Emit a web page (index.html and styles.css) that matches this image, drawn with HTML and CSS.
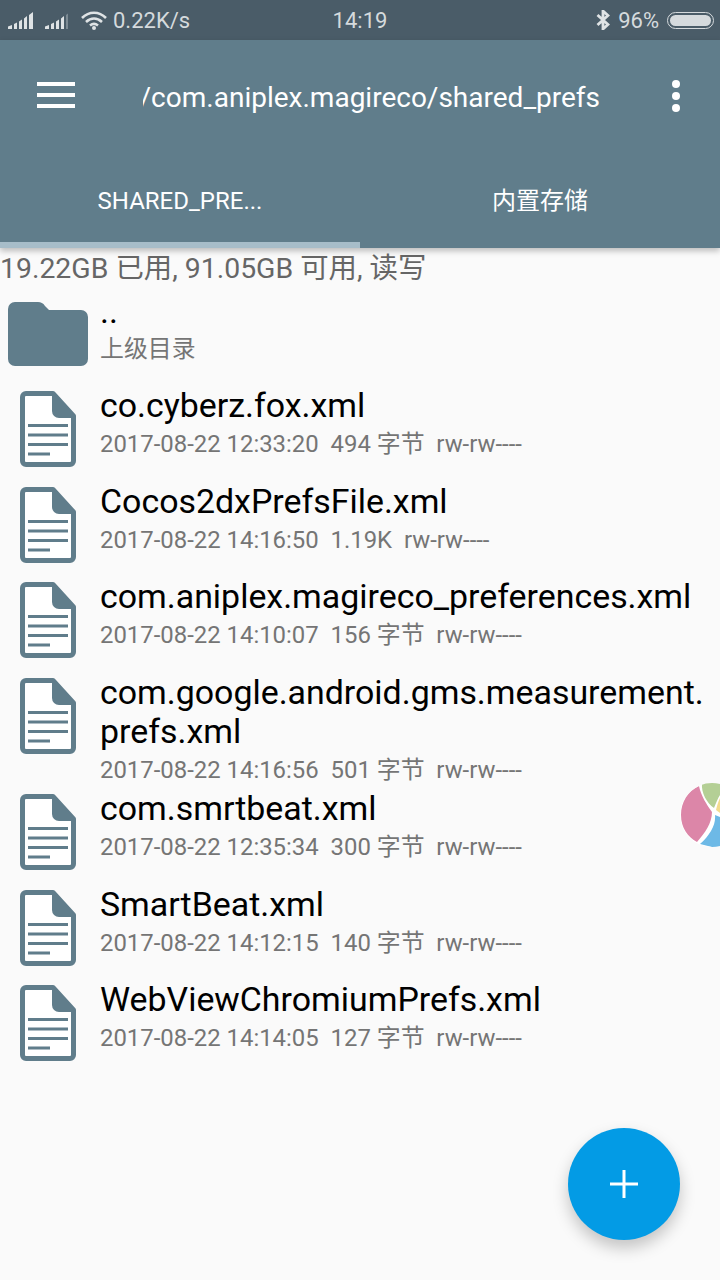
FILE: index.html
```html
<!DOCTYPE html>
<html lang="zh-CN">
<head>
  <meta charset="UTF-8">
  <meta name="viewport" content="width=device-width, initial-scale=1.0">
  <title>Files</title>
  <link rel="stylesheet" href="styles.css">
</head>
<body>
  <svg class="defs" width="0" height="0">
    <symbol id="file-icon" viewBox="0 0 56 76">
      <path d="M6 2.500H33L53.500 25V70A3.500 3.500 0 0 1 50 73.500H6A3.500 3.500 0 0 1 2.500 70V6A3.500 3.500 0 0 1 6 2.500Z" fill="#fff" stroke="#607d8b" stroke-width="5" stroke-linejoin="round"/>
      <path d="M32 2L55 25V27H39A7 7 0 0 1 32 20Z" fill="#607d8b"/>
      <path d="M8 34.500H48M8 44H48M8 53.500H48M8 63H30" stroke="#607d8b" stroke-width="3" fill="none"/>
    </symbol>
  </svg>

  <div class="status-bar">
    <div class="status-left">
      <svg class="signal" width="25" height="17" viewBox="0 0 25 17">
        <path d="M0 14.500L4 13V17H0ZM6 12L9 10.500V17H6ZM11 9.500L14 7.500V17H11ZM16 6.500L19 4V17H16ZM21 3L25 0V17H21Z" fill="#dfe3e5"/>
      </svg>
      <svg class="signal signal-weak" width="25" height="17" viewBox="0 0 25 17">
        <path d="M0 14.500L4 13V17H0ZM6 12L9 10.500V17H6ZM11 9.500L14 7.500V17H11ZM16 6.500L19 4V17H16Z" fill="#dfe3e5"/>
        <path d="M21 3L23 1.500V17H21Z" fill="#7d8b94"/>
      </svg>
      <svg class="wifi" width="28" height="20" viewBox="0 0 28 20">
        <path d="M2 8C9 1 19 1 26 8M6 12C11 7.500 17 7.500 22 12M10 15.500C12.500 13.500 15.500 13.500 18 15.500" fill="none" stroke="#dfe3e5" stroke-width="2.600"/>
        <circle cx="14" cy="18" r="2" fill="#dfe3e5"/>
      </svg>
      <span>0.22K/s</span>
    </div>
    <div class="status-time">14:19</div>
    <div class="status-right">
      <svg width="14" height="20" viewBox="0 0 14 20">
        <path d="M1.500 5L12 14.500L7 19V1L12 5.500L1.500 15" fill="none" stroke="#dfe3e5" stroke-width="2.800"/>
      </svg>
      <span>96%</span>
      <div class="battery"><div class="battery-fill"></div></div>
    </div>
  </div>

  <header class="app-bar">
    <div class="toolbar">
      <button class="menu-btn"><span></span><span></span><span></span></button>
      <div class="path"><span>/data/data/com.aniplex.magireco/shared_prefs</span></div>
      <button class="more-btn"><span></span><span></span><span></span></button>
    </div>
    <div class="tabs">
      <div class="tab tab-active">SHARED_PRE...</div>
      <div class="tab">内置存储</div>
    </div>
  </header>

  <main class="content">
    <div class="storage">19.22GB 已用, 91.05GB 可用, 读写</div>

    <div class="row row-parent">
      <svg class="folder" width="80" height="64" viewBox="0 0 80 64">
        <path d="M7 0H30C33 0 35 1 37 4L41 8H73A7 7 0 0 1 80 15V57A7 7 0 0 1 73 64H7A7 7 0 0 1 0 57V7A7 7 0 0 1 7 0Z" fill="#607d8b"/>
      </svg>
      <div class="row-text">
        <div class="dots">..</div>
        <div class="sub">上级目录</div>
      </div>
    </div>

    <div class="row">
      <svg class="file" width="56" height="76"><use href="#file-icon"/></svg>
      <div class="row-text">
        <div class="name">co.cyberz.fox.xml</div>
        <div class="sub">2017-08-22 12:33:20&nbsp; 494 字节&nbsp; rw-rw----</div>
      </div>
    </div>
    <div class="row">
      <svg class="file" width="56" height="76"><use href="#file-icon"/></svg>
      <div class="row-text">
        <div class="name">Cocos2dxPrefsFile.xml</div>
        <div class="sub">2017-08-22 14:16:50&nbsp; 1.19K&nbsp; rw-rw----</div>
      </div>
    </div>
    <div class="row">
      <svg class="file" width="56" height="76"><use href="#file-icon"/></svg>
      <div class="row-text">
        <div class="name">com.aniplex.magireco_preferences.xml</div>
        <div class="sub">2017-08-22 14:10:07&nbsp; 156 字节&nbsp; rw-rw----</div>
      </div>
    </div>
    <div class="row row-long">
      <svg class="file" width="56" height="76"><use href="#file-icon"/></svg>
      <div class="row-text">
        <div class="name">com.google.android.gms.measurement.<br>prefs.xml</div>
        <div class="sub">2017-08-22 14:16:56&nbsp; 501 字节&nbsp; rw-rw----</div>
      </div>
    </div>
    <div class="row">
      <svg class="file" width="56" height="76"><use href="#file-icon"/></svg>
      <div class="row-text">
        <div class="name">com.smrtbeat.xml</div>
        <div class="sub">2017-08-22 12:35:34&nbsp; 300 字节&nbsp; rw-rw----</div>
      </div>
    </div>
    <div class="row">
      <svg class="file" width="56" height="76"><use href="#file-icon"/></svg>
      <div class="row-text">
        <div class="name">SmartBeat.xml</div>
        <div class="sub">2017-08-22 14:12:15&nbsp; 140 字节&nbsp; rw-rw----</div>
      </div>
    </div>
    <div class="row">
      <svg class="file" width="56" height="76"><use href="#file-icon"/></svg>
      <div class="row-text">
        <div class="name">WebViewChromiumPrefs.xml</div>
        <div class="sub">2017-08-22 14:14:05&nbsp; 127 字节&nbsp; rw-rw----</div>
      </div>
    </div>
  </main>

  <!-- floating assistant ball, half off the right edge -->
  <svg class="ball" width="40" height="64" viewBox="0 0 40 64">
    <defs><clipPath id="ball-clip"><circle cx="32" cy="32" r="32"/></clipPath></defs>
    <g clip-path="url(#ball-clip)">
      <rect width="40" height="64" fill="#fff"/>
      <path d="M19 3C8 8 1 19 1 32C1 45 8 54 17 59C25 50 32 40 32 29C27 22 21 13 19 3Z" fill="#dc86a8"/>
      <path d="M22 0C21 10 27 20 34 25C36 20 38 15 40 12V0Z" fill="#b4cf95"/>
      <path d="M36 27L40 30V15C38 19 37 23 36 27Z" fill="#f3dc8f"/>
      <path d="M35 32C36 42 30 52 20 61L40 66V34Z" fill="#6db9e6"/>
    </g>
  </svg>

  <button class="fab">
    <svg width="28" height="28" viewBox="0 0 28 28"><path d="M12.500 0h3v12.500H28v3H15.500V28h-3V15.500H0v-3h12.500z" fill="#fff"/></svg>
  </button>
</body>
</html>
```

FILE: styles.css
```css
* {
  box-sizing: border-box;
}
html, body {
  margin: 0;
  padding: 0;
}
body {
  position: relative;
  width: 720px;
  height: 1280px;
  overflow: hidden;
  background-color: #fafafa;
  font-family: Roboto, "Noto Sans CJK SC", sans-serif;
}
button {
  border: 0;
  padding: 0;
  background: none;
}
.defs {
  position: absolute;
}

/* status bar */
.status-bar {
  display: grid;
  grid-template-columns: 1fr auto 1fr;
  align-items: center;
  height: 40px;
  padding: 0 6px 0 8px;
  background-color: #4a5c68;
  color: #d5dadd;
  font-size: 22px;
}
.status-left {
  display: flex;
  align-items: center;
}
.signal {
  margin-right: 12px;
}
.signal-weak {
  margin-right: 10px;
}
.wifi {
  margin-right: 5px;
}
.status-time {
  margin-right: 2px;
}
.status-right {
  display: flex;
  align-items: center;
  justify-content: flex-end;
  gap: 8px;
}
.battery {
  width: 47px;
  height: 17px;
  padding: 2px;
  border: 1.5px solid #d5dadd;
  border-radius: 9px;
}
.battery-fill {
  height: 100%;
  border-radius: 6px;
  background-color: #d5dadd;
}

/* app bar */
.app-bar {
  position: relative;
  height: 208px;
  background-color: #607d8b;
  box-shadow: 0 3px 6px rgba(0, 0, 0, 0.25);
}
.toolbar {
  display: flex;
  align-items: center;
  height: 112px;
  color: #fff;
}
.menu-btn {
  display: flex;
  flex-direction: column;
  gap: 7px;
  width: 38px;
  margin: 0 68px 2px 37px;
}
.menu-btn span {
  height: 4px;
  background-color: #fff;
}
.path {
  display: flex;
  justify-content: flex-end;
  width: 457px;
  padding-top: 2px;
  overflow: hidden;
  font-size: 28px;
  white-space: nowrap;
}
.more-btn {
  display: flex;
  flex-direction: column;
  gap: 4px;
  margin-left: 72px;
}
.more-btn span {
  width: 8px;
  height: 8px;
  border-radius: 50%;
  background-color: #fff;
}
.tabs {
  display: flex;
  height: 96px;
}
.tab {
  flex: 1;
  padding-top: 33px;
  border-bottom: 6px solid transparent;
  color: #fff;
  font-size: 24px;
  line-height: 32px;
  text-align: center;
}
.tab-active {
  border-bottom-color: #a7bdc9;
}

/* file list */
.storage {
  height: 40px;
  padding-top: 2px;
  color: #666;
  font-size: 28.4px;
  line-height: 38px;
}
.row {
  display: flex;
  align-items: flex-start;
  height: 95.5px;
  padding-left: 20px;
}
.row-parent {
  height: 98px;
  padding: 14px 0 0 8px;
}
.row-long {
  height: 116.5px;
}
.file {
  flex: none;
  margin-top: 5px;
}
.row-text {
  margin-left: 24px;
  white-space: nowrap;
}
.row-parent .row-text {
  margin-left: 12px;
}
.name {
  color: #000;
  font-size: 33.9px;
  line-height: 39px;
}
.dots {
  height: 31px;
  color: #000;
  font-size: 34px;
  line-height: 18px;
}
.sub {
  color: #757575;
  font-size: 23.9px;
  line-height: 38px;
}
.row-parent .sub {
  line-height: 32px;
}

.ball {
  position: absolute;
  top: 783px;
  left: 680px;
}
.fab {
  position: absolute;
  top: 1128px;
  left: 568px;
  display: flex;
  align-items: center;
  justify-content: center;
  width: 112px;
  height: 112px;
  border-radius: 50%;
  background-color: #039be5;
  box-shadow: 0 8px 16px rgba(0, 0, 0, 0.22);
}
```
